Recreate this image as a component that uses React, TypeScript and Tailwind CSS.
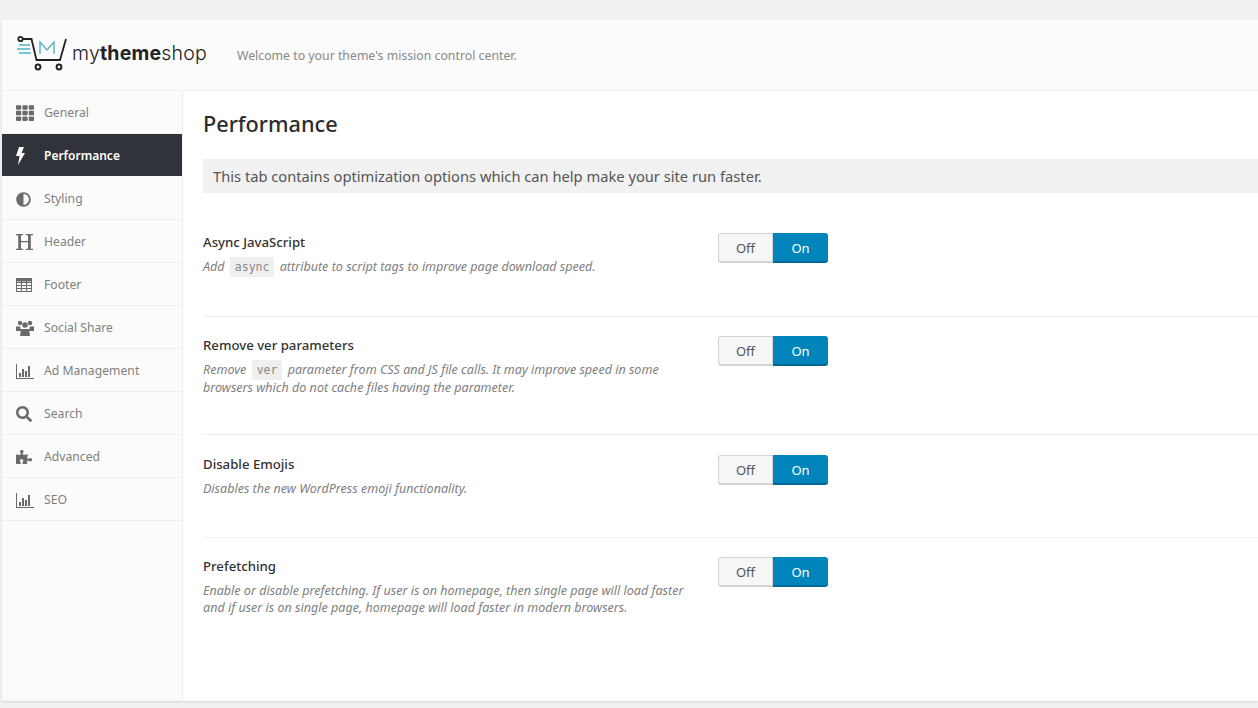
import type { ReactNode } from 'react'
import { FaAdjust, FaPuzzlePiece, FaSearch, FaTh } from 'react-icons/fa'

function BarChartIcon() {
  return (
    <svg width="18" height="15" viewBox="0 0 18 15" fill="currentColor">
      <rect x="0" y="0" width="1" height="15" />
      <rect x="0" y="14" width="18" height="1" />
      <rect x="3" y="9" width="2" height="4" />
      <rect x="6" y="5" width="2" height="8" />
      <rect x="9" y="7" width="2" height="6" />
      <rect x="12" y="2" width="2" height="11" />
    </svg>
  )
}

function HeaderIcon() {
  return (
    <svg width="17" height="16" viewBox="0 0 17 16" fill="currentColor">
      <path d="M0 0h7v1.2H5v5.7h7V1.2h-2V0h7v1.2h-2.2v13.6H17V16h-7v-1.2h2V8.2H5v6.6h2V16H0v-1.2h2.2V1.2H0z" />
    </svg>
  )
}

function BoltIcon() {
  return (
    <svg width="9" height="18" viewBox="0 0 9 18" fill="currentColor">
      <path d="M3 0h5L5.6 6H9L2 18l1.6-9H0z" />
    </svg>
  )
}

function TableIcon() {
  return (
    <svg width="16" height="14" viewBox="0 0 16 14" fill="none" stroke="currentColor" strokeWidth="1">
      <path d="M.5.5h15v13H.5z" />
      <path d="M.5 4.5h15M.5 7.5h15M.5 10.5h15M5.5 1v12M10.5 1v12" />
      <path d="M.5 2h15" strokeWidth="3" />
    </svg>
  )
}

function UsersIcon() {
  return (
    <svg width="18" height="16" viewBox="0 0 18 16" fill="currentColor">
      <circle cx="4" cy="3" r="2.2" />
      <circle cx="14" cy="3" r="2.2" />
      <circle cx="9" cy="5" r="2.8" />
      <path d="M0 6.5h4.2L5 11H0zM18 6.5h-4.2L13 11h5zM5 9h8l1 7H4z" />
    </svg>
  )
}

function CartLogo() {
  return (
    <svg width="52" height="38" viewBox="0 0 52 38" fill="none">
      <circle cx="3.5" cy="4" r="2.2" stroke="#222" strokeWidth="1.8" />
      <path d="M6 4h8.5l5 21h23.5L49 4" stroke="#222" strokeWidth="1.8" />
      <path d="M2 10h11M0 14h13M2 18h12" stroke="#4fb4c4" strokeWidth="1.4" />
      <path d="M23 19V7l7 8 7-8v12" stroke="#4fb4c4" strokeWidth="1.4" />
      <circle cx="21" cy="32" r="2.4" stroke="#222" strokeWidth="2" />
      <circle cx="42" cy="32" r="2.4" stroke="#222" strokeWidth="2" />
    </svg>
  )
}

const navItems: { label: string; icon: ReactNode; active?: boolean }[] = [
  { label: 'General', icon: <FaTh size={18} /> },
  { label: 'Performance', icon: <BoltIcon />, active: true },
  { label: 'Styling', icon: <FaAdjust size={15} /> },
  { label: 'Header', icon: <HeaderIcon /> },
  { label: 'Footer', icon: <TableIcon /> },
  { label: 'Social Share', icon: <UsersIcon /> },
  { label: 'Ad Management', icon: <BarChartIcon /> },
  { label: 'Search', icon: <FaSearch size={16} /> },
  { label: 'Advanced', icon: <FaPuzzlePiece size={16} /> },
  { label: 'SEO', icon: <BarChartIcon /> },
]

function Code({ children }: { children: ReactNode }) {
  return (
    <code className="mx-[2px] bg-[#efefef] px-[5px] py-[3px] font-['DejaVu_Sans_Mono',monospace] text-[11.5px] not-italic text-[#888]">
      {children}
    </code>
  )
}

function Toggle() {
  return (
    <div className="flex h-[30px] w-[110px] shrink-0 text-[13px]">
      <div className="flex w-[55px] items-center justify-center rounded-l-[3px] border border-b-2 border-[#d4d4d4] bg-[#f6f6f6] pt-[2px] text-[#555]">
        Off
      </div>
      <div className="flex w-[55px] items-center justify-center rounded-r-[3px] border-b-2 border-[#006799] bg-[#0085ba] pt-[3px] text-white">
        On
      </div>
    </div>
  )
}

function OptionRow({ title, className, children }: { title: string; className: string; children: ReactNode }) {
  return (
    <div className={`flex border-[#eeeeee] ${className}`}>
      <div className="w-[515px] shrink-0">
        <h3 className="text-[13.2px] leading-[18px] font-medium text-[#333]">{title}</h3>
        <p className="mt-[7px] text-[12.55px] leading-[17px] text-[#808080] italic">{children}</p>
      </div>
      <Toggle />
    </div>
  )
}

export default function App() {
  return (
    <div className="h-[708px] w-[1258px] overflow-hidden bg-[#f1f1f1] pt-[20px] pb-[7px] pl-[2px] font-['Noto_Sans','Open_Sans',sans-serif]">
      <div className="flex h-[681px] flex-col rounded-tl-[4px] bg-white shadow-[0_1px_2px_rgba(0,0,0,0.12)]">
        <header className="flex h-[71px] shrink-0 items-center border-b border-[#eeeeee] bg-[#fbfbfb] pl-[15px]">
          <div className="flex items-center pb-[3px]">
            <CartLogo />
            <span className="ml-[3px] font-['Inter',sans-serif] text-[19.5px] font-light tracking-[0.2px] text-[#222]">
              my<b className="font-bold">theme</b>shop
            </span>
          </div>
          <span className="ml-[30px] pt-[3px] text-[12.3px] text-[#888]">Welcome to your theme's mission control center.</span>
        </header>
        <div className="flex min-h-0 flex-1">
          <nav className="w-[181px] shrink-0 border-r border-[#eeeeee] bg-[#fbfbfb]">
            {navItems.map((item) => (
              <div
                key={item.label}
                className={`flex h-[43px] items-center border-b ${
                  item.active
                    ? 'border-[#fbfbfb] bg-[#30343a] pt-[1px] text-[12px] font-semibold text-white'
                    : 'border-[#efefef] pt-[2px] text-[12.2px] text-[#808080]'
                }`}
              >
                <span className={`flex w-[42px] justify-start pl-[14px] ${item.active ? 'text-white' : 'text-[#6a6a6a]'}`}>
                  {item.icon}
                </span>
                {item.label}
              </div>
            ))}
          </nav>
          <main className="min-w-0 flex-1 pl-[20px]">
            <h1 className="pt-[18px] text-[21.7px] leading-[30px] font-medium text-[#2c2c2c]">Performance</h1>
            <div className="mt-[20px] flex h-[34px] items-center bg-[#f1f1f1] pt-[1px] pl-[10px] text-[14.7px] text-[#555]">
              This tab contains optimization options which can help make your site run faster.
            </div>
            <OptionRow title="Async JavaScript" className="h-[124px] border-b pt-[40px]">
              Add <Code>async</Code> attribute to script tags to improve page download speed.
            </OptionRow>
            <OptionRow title="Remove ver parameters" className="h-[118px] border-b pt-[19px]">
              Remove <Code>ver</Code> parameter from CSS and JS file calls. It may improve speed in some
              <br />
              browsers which do not cache files having the parameter.
            </OptionRow>
            <OptionRow title="Disable Emojis" className="h-[103px] border-b pt-[20px]">
              Disables the new WordPress emoji functionality.
            </OptionRow>
            <OptionRow title="Prefetching" className="h-[120px] pt-[19px]">
              Enable or disable prefetching. If user is on homepage, then single page will load faster
              <br />
              and if user is on single page, homepage will load faster in modern browsers.
            </OptionRow>
          </main>
        </div>
      </div>
    </div>
  )
}
